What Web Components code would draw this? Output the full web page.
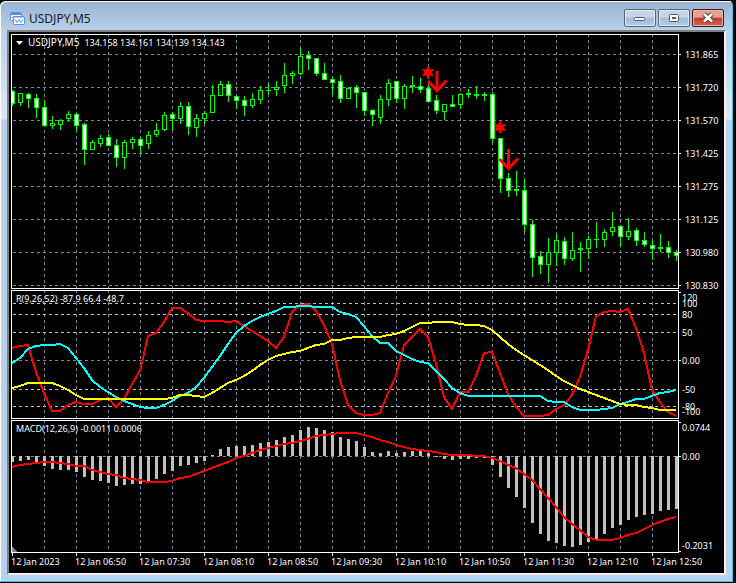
<!DOCTYPE html>
<html lang="en">
<head>
<meta charset="utf-8">
<title>USDJPY,M5</title>
<style>
  html, body { margin: 0; }
  body { background: #000; font-family: "Noto Sans", "Open Sans", sans-serif; }
</style>
</head>
<body>
<chart-window caption="USDJPY,M5">
  <chart-pane kind="price">
    <span slot="legend" style="font-size:10px">USDJPY,M5</span>
    <span slot="legend">134.158 134.161 134.139 134.143</span>
  </chart-pane>
  <chart-pane kind="range"><span slot="legend">R(9,26,52) -87.9 66.4 -48.7</span></chart-pane>
  <chart-pane kind="macd"><span slot="legend">MACD(12,26,9) -0.0011 0.0006</span></chart-pane>
  <time-axis></time-axis>
</chart-window>

<script>
const STEP = 8, PLOT_W = 668, LEFT = 11;
const GRID = '#778899';

// [high, body top, body bottom, low, kind]: w = falling, h = rising, d = doji
const CANDLES = [
[90,91,103,105,'w'],[93,93,102,105,'h'],[93,94,98,107,'w'],[94,98,107,117,'w'],[100,107,125,126,'w'],[116,123,125,128,'h'],[119,120,124,129,'h'],[111,114,118,121,'h'],[113,114,125,130,'w'],[123,124,149,164,'w'],
[140,142,149,149,'h'],[135,138,143,146,'h'],[134,137,145,145,'w'],[139,145,157,166,'w'],[140,142,157,168,'h'],[137,139,142,148,'h'],[137,139,145,153,'w'],[131,135,143,148,'h'],[123,130,134,136,'h'],[112,115,129,130,'h'],
[112,114,118,129,'w'],[102,106,118,123,'h'],[102,106,126,134,'w'],[114,118,127,136,'h'],[111,113,118,123,'h'],[85,95,112,112,'h'],[81,84,95,95,'h'],[81,84,95,101,'w'],[96,96,100,108,'w'],[96,100,105,115,'w'],
[93,99,105,107,'h'],[86,90,99,103,'h'],[83,90,90,93,'d'],[81,87,89,95,'h'],[63,75,85,92,'h'],[71,73,75,83,'h'],[48,56,73,74,'h'],[51,55,58,69,'w'],[58,58,73,75,'w'],[63,73,79,79,'w'],
[77,79,82,94,'w'],[75,81,98,102,'w'],[87,88,98,98,'h'],[85,87,92,107,'w'],[92,92,110,115,'w'],[109,110,114,125,'w'],[95,99,117,123,'h'],[79,83,99,105,'h'],[81,81,98,102,'w'],[84,86,98,108,'h'],
[76,85,86,92,'d'],[78,86,89,92,'w'],[85,88,101,101,'w'],[95,100,110,113,'w'],[104,104,111,119,'h'],[95,104,106,106,'w'],[93,94,104,108,'h'],[89,93,94,97,'d'],[86,94,95,98,'d'],[92,94,95,100,'d'],
[92,94,138,142,'w'],[138,138,178,192,'w'],[173,178,190,196,'w'],[171,189,190,195,'d'],[179,190,224,231,'w'],[220,224,257,276,'w'],[251,256,264,273,'w'],[238,252,264,282,'h'],[234,240,252,265,'h'],[237,241,258,264,'w'],
[232,250,258,260,'h'],[242,248,249,271,'d'],[236,239,248,258,'h'],[222,239,239,247,'d'],[229,232,239,246,'h'],[212,227,231,235,'h'],[225,226,236,246,'w'],[218,231,236,239,'h'],[228,230,240,245,'w'],[232,240,244,246,'w'],
[240,245,248,259,'w'],[234,247,248,251,'d'],[241,247,252,257,'w'],[250,252,255,260,'w']];

const FAST = [348,346,345,372,393,411,411,405,402,404,404,400,398,407,399,384,371,336,333,322,308,308,313,320,321,321,321,322,321,326,331,336,341,348,337,312,305,304,311,325,344,380,405,413,415,415,413,393,376,345,337,329,337,364,397,409,392,392,376,353,352,373,394,407,416,416,416,415,409,405,395,377,350,316,312,311,312,309,328,353,390,402,412,416];
const MID = [363,358,349,346,345,345,344,348,358,368,380,387,392,397,401,404,407,408,408,405,401,396,393,387,378,367,356,344,333,326,321,317,314,311,307,307,306,306,307,307,307,312,314,317,326,336,343,343,351,355,359,362,363,371,379,388,393,396,396,396,396,396,396,396,396,396,396,401,402,402,407,410,410,410,409,408,404,402,399,399,396,393,392,390];
const SLOW = [388,386,383,383,383,383,386,390,395,399,399,399,399,399,399,399,399,399,399,399,398,395,395,396,397,393,388,383,380,376,371,365,360,356,354,352,351,348,345,344,340,340,338,337,337,337,337,335,334,331,327,323,323,322,322,322,324,325,325,326,330,337,344,350,355,360,365,370,376,381,385,389,392,395,398,401,404,405,405,407,408,410,410,410];
const HIST = [462,461,460,462,466,469,470,470,472,477,480,481,483,486,485,484,484,481,479,474,471,466,465,463,461,455,449,447,446,446,445,443,442,440,437,435,430,427,428,430,432,437,439,441,447,452,453,451,453,452,451,451,453,457,459,460,459,459,458,458,465,477,488,497,508,523,534,541,543,546,547,545,542,539,534,528,525,520,517,515,514,511,510,509];
const SIGNAL = [467,465,464,463,462,462,463,464,466,466,470,472,474,475,478,479,480,482,482,482,481,478,477,474,471,468,465,462,458,456,453,450,448,446,444,443,441,439,436,435,434,433,433,433,435,437,440,442,445,447,449,450,451,452,454,455,455,455,456,456,458,461,465,468,474,480,489,498,507,517,524,530,537,540,540,540,538,535,533,529,525,522,519,517];

const cx = i => LEFT + 1 + i * STEP;
const line = (data, color, w = 2) =>
  `<polyline points="${data.map((y, i) => cx(i) + ',' + y).join(' ')}" fill="none" stroke="${color}" stroke-width="${w}" stroke-linejoin="round"/>`;
const hLine = (y, color) =>
  `<path d="M${LEFT + 1} ${y}.5H678" stroke="${color}" stroke-dasharray="3 3" stroke-dashoffset="-1"/>`;
const vGrid = (top, bottom) => {
  let s = '';
  for (let x = 44; x < 678; x += 32) s += `<path d="M${x}.5 ${top}V${bottom}" stroke="${GRID}" stroke-dasharray="3 3"/>`;
  return s;
};
const candle = ([hi, t, b, lo, kind], i) => {
  const x = cx(i);
  let s = '';
  if (kind === 'd') {
    return `<path d="M${x}.5 ${hi}V${lo + 1}" stroke="#0f0"/><rect x="${x - 2}" y="${t}" width="5" height="${b - t + 1}" fill="#0f0"/>`;
  }
  if (hi < t) s += `<path d="M${x}.5 ${hi}V${t}" stroke="#0f0"/>`;
  if (lo > b) s += `<path d="M${x}.5 ${b}V${lo + 1}" stroke="#0f0"/>`;
  return s + `<rect x="${x - 2}.5" y="${t}.5" width="4" height="${b - t}" fill="${kind === 'w' ? '#fff' : '#000'}" stroke="#0f0"/>`;
};
const star = (x, y) => {
  let p = [];
  for (let k = 0; k < 12; k++) {
    const r = k % 2 ? 3.6 : 7, a = Math.PI * k / 6 - Math.PI / 2;
    p.push((x + r * Math.cos(a)).toFixed(1) + ',' + (y + r * Math.sin(a)).toFixed(1));
  }
  return `<polygon points="${p.join(' ')}" fill="#f00" shape-rendering="auto"/>`;
};
const arrow = (x, y) =>
  `<g fill="none" stroke="#f00" shape-rendering="auto"><path d="M${x} ${y}v19" stroke-width="3"/><path d="M${x - 9} ${y + 10}l9 9.500l9.500-10" stroke-width="3"/></g>`;

const PANES = {
  price: {
    top: 34, height: 255, labelX: 6,
    labels: ['131.865','131.720','131.570','131.425','131.275','131.125','130.980','130.830'].map((t, i) => [t, 54 + 33 * i]),
    ticks: [54,87,120,153,186,219,252,285],
    draw: () => [54,87,120,153,186,219,252,285].map(y => hLine(y, GRID)).join('') + CANDLES.map(candle).join('') +
      star(428, 72.5) + arrow(437, 71) + star(500, 127.500) + arrow(508.5, 149)
  },
  range: {
    top: 290, height: 129, labelX: 3,
    labels: [['120',297],['100',303],['80',314],['50',332],['0.00',360],['-50',389],['-80',406],['-100',411]],
    ticks: [292,360],
    draw: () => [303,314,332,389,406].map(y => hLine(y, '#c0c0c0')).join('') + hLine(360, GRID) +
      line(FAST, '#f00') + line(MID, '#0ff') + line(SLOW, '#ff0')
  },
  macd: {
    top: 420, height: 133, labelX: 3,
    labels: [['0.0744',427],['0.00',456],['-0.2031',545]],
    ticks: [422,456,551],
    draw: () => hLine(456, GRID) + HIST.map((y, i) => {
        const t = Math.min(y, 456), h = Math.abs(y - 456) || 1;
        return `<rect x="${cx(i) - 1}" y="${t}" width="3" height="${h}" fill="#c0c0c0"/>`;
      }).join('') + line(SIGNAL, '#f00') + `<path d="M12 547l6 6h-6z" fill="${GRID}"/>`
  }
};

customElements.define('chart-pane', class extends HTMLElement {
  connectedCallback() {
    const p = PANES[this.getAttribute('kind')], price = this.getAttribute('kind') === 'price';
    const pct = y => ((y - p.top) / p.height * 100) + '%';
    this.attachShadow({ mode: 'open' }).innerHTML = `
      <style>
        :host { display: grid; grid-template: minmax(0, 1fr) / minmax(0, 1fr) 45px; contain: size; position: relative; }
        svg { display: block; width: 100%; height: 100%; min-height: 0; }
        .plot { shape-rendering: crispEdges; overflow: hidden; }
        .scale { overflow: visible; font-size: 9px; }
        .legend { position: absolute; left: 5px; top: ${price ? 1 : 2}px; display: flex; gap: 5px; align-items: baseline;
          font-size: 9px; line-height: 14px; color: #fff; white-space: pre; }
        .legend svg { width: 7px; height: 4px; align-self: center; }
      </style>
      <svg class="plot" viewBox="${LEFT} ${p.top} ${PLOT_W} ${p.height}" preserveAspectRatio="none" aria-hidden="true">
        ${vGrid(p.top, p.top + p.height)}${p.draw()}
        <rect x="11.5" y="${p.top}.5" width="667" height="${p.height - 1}" fill="none" stroke="#fff"/>
      </svg>
      <svg class="scale">
        ${p.ticks.map(y => `<rect x="0" y="${pct(y)}" width="2" height="1" fill="#fff"/>`).join('')}
        ${p.labels.map(([t, y]) => `<text x="${p.labelX}" y="${pct(y + 4)}" fill="#fff">${t}</text>`).join('')}
      </svg>
      <div class="legend">${price ? '<svg viewBox="0 0 7 4" aria-hidden="true"><path d="M0 0h7L3.500 4z" fill="#fff"/></svg>' : ''}<slot name="legend"></slot></div>`;
  }
});

customElements.define('time-axis', class extends HTMLElement {
  connectedCallback() {
    const names = ['2023','06:50','07:30','08:10','08:50','09:30','10:10','10:50','11:30','12:10','12:50'];
    const pct = x => (x / PLOT_W * 100) + '%';
    this.attachShadow({ mode: 'open' }).innerHTML = `
      <style>
        :host { display: block; height: 20px; padding-right: 45px; }
        svg { display: block; width: 100%; height: 20px; overflow: visible; font-size: 9px; }
      </style>
      <svg>${names.map((t, i) => `<rect x="${pct(1 + 64 * i)}" y="0" width="1" height="3" fill="#fff"/>
        <text x="${pct(64 * i)}" y="12" fill="#fff">12 Jan ${t}</text>`).join('')}</svg>`;
  }
});

customElements.define('window-button', class extends HTMLElement {
  connectedCallback() {
    const kind = this.getAttribute('kind');
    const icons = {
      Minimize: '<rect x="10.500" y="8.500" width="10" height="3" rx="1" fill="#fff" stroke="#4a5568"/>',
      Maximize: '<rect x="11.500" y="5.500" width="9" height="7" rx="1" fill="#fff" stroke="#4a5568"/><rect x="14.500" y="8.500" width="3" height="1" fill="#9db5cf" stroke="#4a5568"/>',
      Close: '<path d="M12 5l8 7.500M20 5l-8 7.500" stroke="#4d3a42" stroke-width="4.500"/><path d="M12 5l8 7.500M20 5l-8 7.500" stroke="#fff" stroke-width="2.600"/>'
    };
    this.attachShadow({ mode: 'open' }).innerHTML = `
      <style>
        :host { display: block; }
        button { display: block; width: 32px; height: 18px; padding: 0; border: 1px solid #56677c; border-radius: 2px;
          background: linear-gradient(#c3d5e9 0 45%, #a3bcd8 50%, #b4cce6); box-shadow: inset 0 0 0 1px #dbe7f4; }
        button.Close { border-color: #43141c; background: linear-gradient(#e5a08f 0 45%, #bd3f2c 50%, #d2694e); box-shadow: inset 0 0 0 1px #e9b4a6; }
        svg { display: block; width: 32px; height: 18px; margin: -1px; }
      </style>
      <button type="button" class="${kind}" aria-label="${kind}"><svg viewBox="0 0 32 18" fill="none">${icons[kind]}</svg></button>`;
  }
});

customElements.define('chart-window', class extends HTMLElement {
  connectedCallback() {
    this.attachShadow({ mode: 'open' }).innerHTML = `
      <style>
        :host { display: flex; flex-direction: column; box-sizing: border-box; height: 100vh; min-height: 400px; padding: 0 7px 7px 7px;
          border-style: solid; border-width: 1px 3px 1px 0; border-color: #000;
          border-radius: 6px 6px 0 0;
          background: linear-gradient(#98b4d2, #b9d1ea 30px, #dfe9f5 118px, #b9d1ea 119px);
          box-shadow: inset -1px -1px #35c6ea, inset 1px 1px #fff; }
        header { display: flex; align-items: center; height: 29px; padding: 4px 2px 0 3px; box-sizing: border-box; }
        header > svg { width: 15px; height: 15px; margin: 2px 4px 0 0; }
        h1 { flex: 1; margin: 0; font-size: 12px; font-weight: 400; line-height: 16px; color: #1b1b1b; padding-top: 2px; }
        .buttons { display: flex; gap: 2px; }
        main { flex: 1; display: grid; box-sizing: border-box; min-height: 0;
          grid-template-rows: minmax(0, 255fr) minmax(0, 129fr) minmax(0, 133fr) 19px; row-gap: 1px;
          padding: 2px 0 0 2px; background: #000; color: #fff;
          border: 2px solid #808080; border-right-color: #f0f0f0; border-bottom-color: #f0f0f0; }
        ::slotted(time-axis) { margin-top: -1px; }
      </style>
      <header>
        <svg viewBox="0 0 15 15" fill="#fff" stroke="#5a8de8" aria-hidden="true">
          <rect x=".5" y="1.500" width="11" height="8" rx="1"/><path d="M1 3h10" stroke-width="2"/>
          <path d="M2 7l2-2 2 2" fill="none"/>
          <rect x="3.500" y="5.500" width="11" height="8" rx="1"/><path d="M4 6h10"/>
          <path d="M5 8.500l2 3 2-3 2 3 2-3" fill="none"/>
        </svg>
        <h1>${this.getAttribute('caption')}</h1>
        <div class="buttons"><window-button kind="Minimize"></window-button><window-button kind="Maximize"></window-button><window-button kind="Close"></window-button></div>
      </header>
      <main><slot></slot></main>`;
  }
});
</script>
</body>
</html>
